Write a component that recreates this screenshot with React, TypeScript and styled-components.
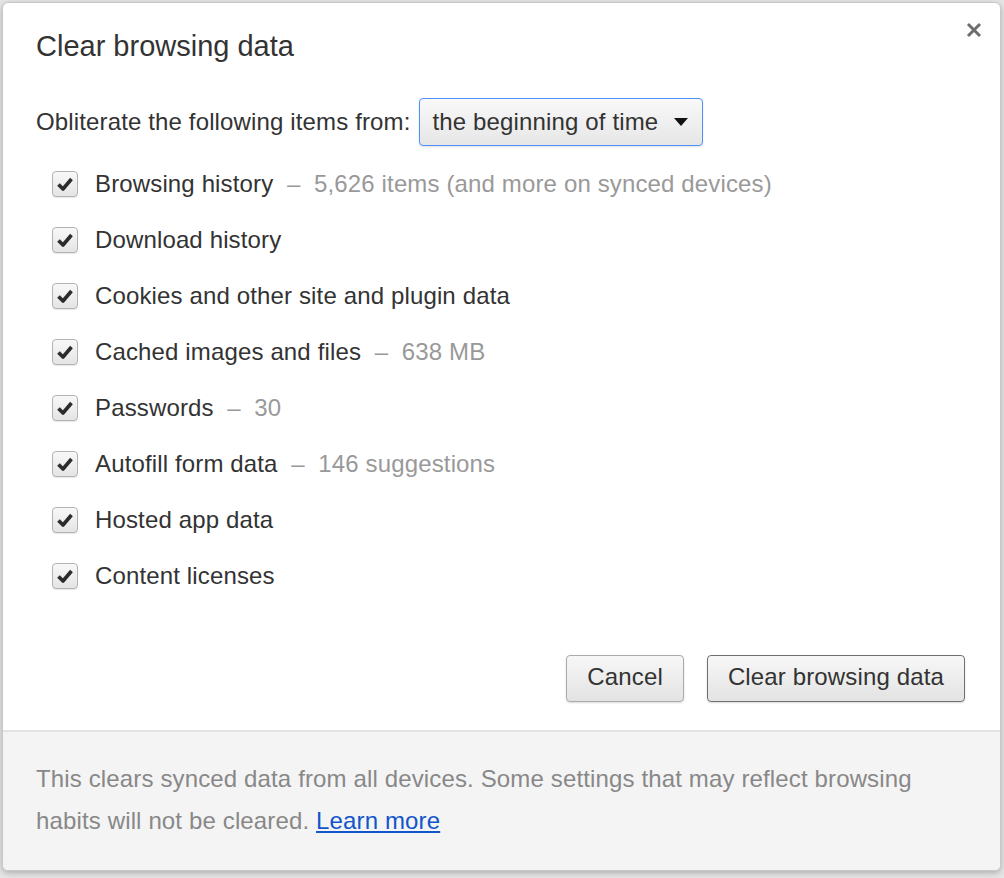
import styled, { createGlobalStyle } from 'styled-components';

const GlobalStyle = createGlobalStyle`
  html, body {
    margin: 0;
    padding: 0;
    background: #e6e6e6;
  }
  body {
    font-family: 'Liberation Sans', Arial, sans-serif;
    letter-spacing: 0.14px;
    color: #333;
  }
`;

const Page = styled.div`
  width: 1004px;
  height: 878px;
  padding: 2px 0 0 2px;
  box-sizing: border-box;
`;

const Dialog = styled.div`
  position: relative;
  width: 999px;
  height: 869px;
  box-sizing: border-box;
  background: #fff;
  border: 1px solid #c8c8c8;
  border-radius: 6px;
  box-shadow: 0 2px 6px rgba(0, 0, 0, 0.25);
  display: flex;
  flex-direction: column;
  overflow: hidden;
`;

const Body = styled.div`
  flex: 1;
  padding: 27px 33px 0 33px;
  display: flex;
  flex-direction: column;
`;

const Title = styled.h1`
  margin: 0;
  font-size: 29px;
  line-height: 32px;
  font-weight: 400;
  letter-spacing: 0;
  color: #333;
`;

const CloseButton = styled.button`
  position: absolute;
  top: 16px;
  right: 15px;
  width: 22px;
  height: 22px;
  padding: 0;
  border: none;
  background: transparent;
  display: flex;
  align-items: center;
  justify-content: center;
`;

const RangeRow = styled.div`
  margin-top: 36px;
  display: flex;
  align-items: center;
  gap: 8px;
  font-size: 24px;
  height: 48px;
`;

const Select = styled.div`
  height: 48px;
  width: 284px;
  box-sizing: border-box;
  display: flex;
  align-items: center;
  justify-content: space-between;
  padding: 0 14px 0 13px;
  border: 1px solid #4d90fe;
  border-radius: 4px;
  background: linear-gradient(#f9f9f9, #e6e6e6);
  box-shadow: 0 1px 2px rgba(0, 0, 0, 0.12);
  font-size: 24px;
  color: #333;
`;

const List = styled.div`
  margin-top: 10px;
  display: flex;
  flex-direction: column;
`;

const Item = styled.label`
  height: 56px;
  display: flex;
  align-items: center;
  padding-left: 16px;
  font-size: 24px;
  color: #333;
`;

const Box = styled.span`
  width: 26px;
  height: 26px;
  box-sizing: border-box;
  border: 1px solid #b3b3b3;
  border-radius: 4px;
  background: linear-gradient(#f8f8f8, #e4e4e4);
  box-shadow: 0 1px 1px rgba(0, 0, 0, 0.1);
  margin-right: 17px;
  display: flex;
  align-items: center;
  justify-content: center;
`;

const Detail = styled.span`
  color: #999;
  white-space: pre;
`;

const Actions = styled.div`
  margin-top: 51px;
  display: flex;
  justify-content: flex-end;
  gap: 23px;
  padding-right: 2px;
`;

const Button = styled.button<{ $primary?: boolean }>`
  height: 47px;
  padding: 0 20px 3px;
  font-family: 'Liberation Sans', Arial, sans-serif;
  font-size: 24px;
  letter-spacing: 0.14px;
  color: #333;
  border: 1px solid ${(p) => (p.$primary ? '#6f6f6f' : '#aaaaaa')};
  border-radius: 4px;
  background: linear-gradient(#f7f7f7, #e3e3e3);
  box-shadow: 0 1px 2px rgba(0, 0, 0, 0.15);
`;

const Footer = styled.div`
  height: 140px;
  box-sizing: border-box;
  background: #f4f4f4;
  border-top: 2px solid #e3e3e3;
  padding: 26px 33px 0 33px;
  font-size: 24px;
  line-height: 42px;
  color: #888;
`;

const Link = styled.a`
  color: #1155cc;
  text-decoration: underline;
`;

const Check = () => (
  <svg width="20" height="20" viewBox="0 0 20 20">
    <path d="M3.5 10.5 L8 15 L16.5 5" fill="none" stroke="#2b2b2b" strokeWidth="3.6" strokeLinejoin="round" />
  </svg>
);

const items: { label: string; detail?: string }[] = [
  { label: 'Browsing history', detail: '5,626 items (and more on synced devices)' },
  { label: 'Download history' },
  { label: 'Cookies and other site and plugin data' },
  { label: 'Cached images and files', detail: '638 MB' },
  { label: 'Passwords', detail: '30' },
  { label: 'Autofill form data', detail: '146 suggestions' },
  { label: 'Hosted app data' },
  { label: 'Content licenses' },
];

const App = () => (
  <>
    <GlobalStyle />
    <Page>
      <Dialog>
        <CloseButton>
          <svg width="16" height="16" viewBox="0 0 16 16">
            <path d="M2 2 L14 14 M14 2 L2 14" stroke="#6e6e6e" strokeWidth="3" />
          </svg>
        </CloseButton>
        <Body>
          <Title>Clear browsing data</Title>
          <RangeRow>
            <span>Obliterate the following items from:</span>
            <Select>
              <span>the beginning of time</span>
              <svg width="14" height="8" viewBox="0 0 14 8">
                <path d="M0 0 H14 L7 8 Z" fill="#111" />
              </svg>
            </Select>
          </RangeRow>
          <List>
            {items.map((it) => (
              <Item key={it.label}>
                <Box>
                  <Check />
                </Box>
                <span>{it.label}</span>
                {it.detail && <Detail>{`  –  ${it.detail}`}</Detail>}
              </Item>
            ))}
          </List>
          <Actions>
            <Button>Cancel</Button>
            <Button $primary>Clear browsing data</Button>
          </Actions>
        </Body>
        <Footer>
          This clears synced data from all devices. Some settings that may reflect browsing
          <br />
          habits will not be cleared. <Link href="#">Learn more</Link>
        </Footer>
      </Dialog>
    </Page>
  </>
);

export default App;
